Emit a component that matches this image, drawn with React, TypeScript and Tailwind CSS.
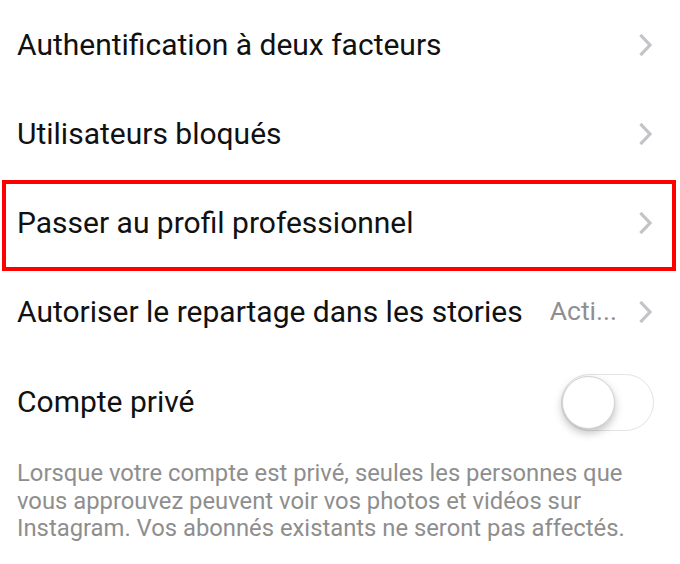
import React from "react";

function Chevron() {
  return (
    <svg width="14" height="22" viewBox="0 0 14 22" className="shrink-0">
      <path d="M2.5 2 L11 11 L2.5 20" fill="none" stroke="#c4c4c8" strokeWidth="3.2" strokeLinecap="square" />
    </svg>
  );
}

function Row({ label, value, highlight }: { label: string; value?: string; highlight?: boolean }) {
  return (
    <div className="relative flex h-[89px] items-center pl-[17px] pr-[27px]">
      <span className="flex-1 whitespace-nowrap text-[30px] leading-none text-[#111]">{label}</span>
      {value && <span className="mr-[22px] text-[26.5px] leading-none text-[#8e8e93]">{value}</span>}
      <Chevron />
      {highlight && (
        <div className="pointer-events-none absolute left-[2px] right-[4px] top-[2px] -bottom-[4px] border-4 border-[#ff0000]" />
      )}
    </div>
  );
}

export default function App() {
  return (
    <div className="h-[564px] w-[680px] overflow-hidden bg-white font-['Roboto','Liberation_Sans',sans-serif]">
      <Row label="Authentification à deux facteurs" />
      <Row label="Utilisateurs bloqués" />
      <Row label="Passer au profil professionnel" highlight />
      <Row label="Autoriser le repartage dans les stories" value="Acti..." />
      <div className="flex h-[92px] items-center pl-[17px] pr-[26px]">
        <span className="flex-1 text-[30px] leading-none text-[#111]">Compte privé</span>
        <div className="relative h-[57px] w-[93px] rounded-full border border-[#e3e3e3] bg-white">
          <div className="absolute left-0 top-[1px] h-[53px] w-[53px] rounded-full border border-[#d0d0d0] bg-white shadow-[0_4px_8px_rgba(0,0,0,0.25)]" />
        </div>
      </div>
      <p className="whitespace-nowrap pl-[17px] pt-[12px] text-[23.8px] leading-[27.5px] text-[#8e8e8e]">
        Lorsque votre compte est privé, seules les personnes que
        <br />
        vous approuvez peuvent voir vos photos et vidéos sur
        <br />
        Instagram. Vos abonnés existants ne seront pas affectés.
      </p>
    </div>
  );
}
